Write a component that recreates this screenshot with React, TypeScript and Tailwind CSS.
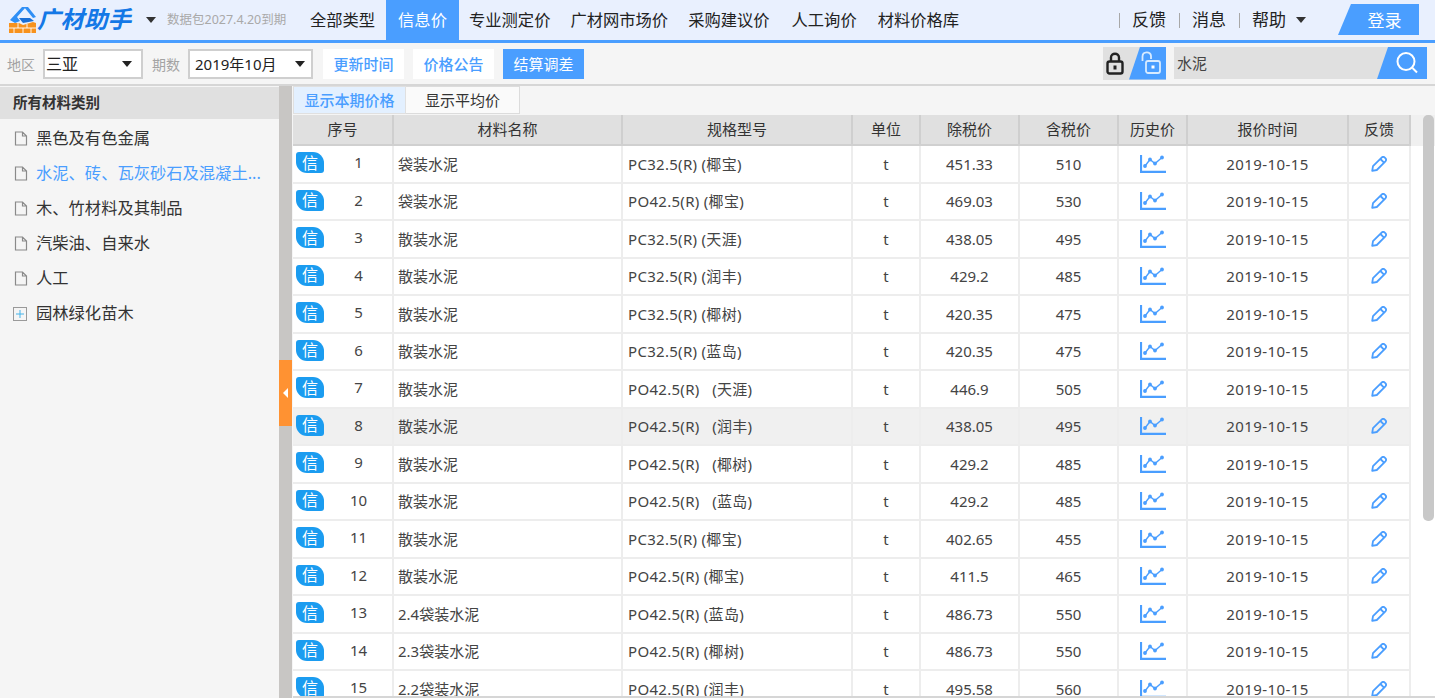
const font = { fontFamily: '"Noto Sans", "Noto Sans CJK SC", sans-serif' };

const rows = [
  ["袋装水泥", "PC32.5(R) (椰宝)", "451.33", "510"],
  ["袋装水泥", "PO42.5(R) (椰宝)", "469.03", "530"],
  ["散装水泥", "PC32.5(R) (天涯)", "438.05", "495"],
  ["散装水泥", "PC32.5(R) (润丰)", "429.2", "485"],
  ["散装水泥", "PC32.5(R) (椰树)", "420.35", "475"],
  ["散装水泥", "PC32.5(R) (蓝岛)", "420.35", "475"],
  ["散装水泥", "PO42.5(R)\u00a0\u00a0 (天涯)", "446.9", "505"],
  ["散装水泥", "PO42.5(R)\u00a0\u00a0 (润丰)", "438.05", "495"],
  ["散装水泥", "PO42.5(R)\u00a0\u00a0 (椰树)", "429.2", "485"],
  ["散装水泥", "PO42.5(R)\u00a0\u00a0 (蓝岛)", "429.2", "485"],
  ["散装水泥", "PC32.5(R) (椰宝)", "402.65", "455"],
  ["散装水泥", "PO42.5(R) (椰宝)", "411.5", "465"],
  ["2.4袋装水泥", "PO42.5(R) (蓝岛)", "486.73", "550"],
  ["2.3袋装水泥", "PO42.5(R) (椰树)", "486.73", "550"],
  ["2.2袋装水泥", "PO42.5(R) (润丰)", "495.58", "560"],
];

const navItems = ["专业测定价", "广材网市场价", "采购建议价", "人工询价", "材料价格库"];
const categories = ["黑色及有色金属", "水泥、砖、瓦灰砂石及混凝土...", "木、竹材料及其制品", "汽柴油、自来水", "人工"];
const headers = ["序号", "材料名称", "规格型号", "单位", "除税价", "含税价", "历史价", "报价时间", "反馈"];
const gridCols = "grid grid-cols-[101px_229px_230px_68px_99px_99px_69px_161px_62px]";

function Logo() {
  return (
    <svg width="28" height="28" viewBox="0 0 28 28" className="shrink-0">
      <path d="M1 14 L13 1 L17 1 L8 11 L11 15 L6 17 Z" fill="#2f8ff5" />
      <path d="M15 1 H19 L27 11 L24 12 Z" fill="#2f8ff5" />
      <path d="M10 12 H21 L25 15 L14 17 Z" fill="#1a6fd6" />
      <path d="M0 17 L10 17 L14 19 L24 16 L27 17 V27 H0 Z" fill="#f7921e" />
      <path d="M0 22 H27 M9 17 V22 M18 18 V22 M5 22 V27 M14 22 V27 M22 22 V27" stroke="#fff" strokeWidth="0.9" fill="none" />
    </svg>
  );
}

function Caret({ className }: { className: string }) {
  return <span className={`inline-block w-0 h-0 border-x-[5px] border-x-transparent border-t-[6px] ${className}`} />;
}

function Sep() {
  return <span className="w-px h-[15px] bg-[#a8a8a8]" />;
}

function FileIcon() {
  return (
    <svg width="14" height="15" viewBox="0 0 14 15" className="shrink-0" fill="none" stroke="#8a8a8a" strokeWidth="1.2">
      <path d="M1.5 1 H8.5 L12.5 5 V14 H1.5 Z M8.5 1 V5 H12.5" />
    </svg>
  );
}

function PlusIcon() {
  return (
    <svg width="14" height="14" viewBox="0 0 14 14" className="shrink-0" fill="none">
      <rect x="0.5" y="0.5" width="13" height="13" stroke="#9a9a9a" />
      <path d="M7 3 V11 M3 7 H11" stroke="#45b4ea" />
    </svg>
  );
}

function InfoBadge() {
  return (
    <span className="flex items-center justify-center w-[28px] h-[21px] ml-[3px] bg-[#1b9cf0] text-white text-[16px] leading-none rounded-tl-[3px] rounded-br-[3px] rounded-tr-[11px] rounded-bl-[11px]">
      信
    </span>
  );
}

function ChartIcon() {
  return (
    <svg width="26" height="18" viewBox="0 0 26 18" fill="none" stroke="#4a9eff" strokeWidth="1.4">
      <path d="M1 0 V16.8 H26" strokeWidth="2.2" />
      <path d="M5 11 L10 4.5 L15 8.5 L22 2.5" />
      <circle cx="5" cy="11" r="1.2" fill="#4a9eff" />
      <circle cx="10" cy="4.5" r="1.2" fill="#4a9eff" />
      <circle cx="15" cy="8.5" r="1.2" fill="#4a9eff" />
      <circle cx="22" cy="2.5" r="1.2" fill="#4a9eff" />
    </svg>
  );
}

function PencilIcon() {
  return (
    <svg width="16" height="16" viewBox="0 0 16 16" fill="none" stroke="#4a9eff" strokeWidth="1.8" strokeLinejoin="round">
      <path d="M1.2 14.8 L2 10.2 L10.6 1.6 C11.6 0.7 12.8 0.7 13.8 1.7 L14.3 2.2 C15.3 3.2 15.3 4.4 14.4 5.4 L5.8 14 Z" />
      <path d="M9.4 3 L13 6.6" />
    </svg>
  );
}

function OpenLockIcon() {
  return (
    <svg width="20" height="26" viewBox="0 0 20 26" fill="none" stroke="#d8ebff" strokeWidth="1.8">
      <path d="M1.5 11 V6.5 C1.5 1 10 1 10 6 V9" />
      <rect x="5" y="11" width="14" height="12" rx="2" />
      <rect x="10.5" y="15.5" width="3" height="3" fill="#fff" stroke="none" />
    </svg>
  );
}

function LockIcon() {
  return (
    <svg width="18" height="24" viewBox="0 0 18 24" fill="none" stroke="#222" strokeWidth="2.4">
      <path d="M5 11 V6.5 C5 1.5 13 1.5 13 6.5 V11" />
      <rect x="1.5" y="10.5" width="15" height="12" rx="2" />
      <rect x="7.5" y="14.5" width="3" height="4" fill="#222" stroke="none" />
    </svg>
  );
}

function SearchIcon() {
  return (
    <svg width="26" height="26" viewBox="0 0 26 26" fill="none" stroke="#fff" strokeWidth="2">
      <circle cx="12" cy="11.5" r="8.5" />
      <path d="M18.5 18 L23 22.5" />
    </svg>
  );
}

export default function App() {
  return (
    <div className="w-[1435px] h-[698px] overflow-hidden flex flex-col bg-[#f5f5f5] text-[#333] text-[15px]" style={font}>
      {/* top nav */}
      <header className="h-[43px] shrink-0 flex items-stretch bg-[#e9f0fe] border-b-[3px] border-[#4a9eff]">
        <div className="flex items-center w-[300px] pl-[9px] shrink-0">
          <Logo />
          <span className="w-[95px] text-[23.5px] leading-none font-bold italic text-[#1478e6] whitespace-nowrap">广材助手</span>
          <Caret className="ml-[14px] border-t-[#333]" />
          <span className="ml-[11px] text-[12.5px] text-[#a9a9a9] whitespace-nowrap">数据包2027.4.20到期</span>
        </div>
        <a className="flex items-center ml-[10px] w-[76px] text-[16.3px] text-[#222] whitespace-nowrap">全部类型</a>
        <a className="flex items-center justify-center w-[73px] bg-[#4a9eff] text-white text-[16.3px]">信息价</a>
        <nav className="flex items-center gap-[20px] ml-[10px] text-[16.3px] text-[#222] whitespace-nowrap">
          {navItems.map((n, i) => (
            <span key={n} className={i === 3 ? "ml-[2px]" : i === 4 ? "ml-[1px]" : ""}>{n}</span>
          ))}
        </nav>
        <div className="flex-1" />
        <div className="flex items-center gap-[12.5px] text-[17px] text-[#222]">
          <Sep />
          <span>反馈</span>
          <Sep />
          <span>消息</span>
          <Sep />
          <span>帮助</span>
          <Caret className="border-t-[#333] ml-[-2.5px]" />
        </div>
        <div className="flex items-center ml-[32px] mr-[16px]">
          <div className="w-[81px] h-[31px] mb-[1px] bg-[#4a9eff] [clip-path:polygon(16%_0,100%_0,100%_100%,0_100%)] flex items-center justify-center pl-[12px] pt-[2px] text-white text-[17px]">
            登录
          </div>
        </div>
      </header>

      {/* toolbar */}
      <div className="h-[43px] shrink-0 flex items-center bg-[#f5f5f5] border-b-2 border-[#d6d6d6] pt-[1px]">
        <span className="ml-[7px] text-[#a3a3a3] text-[14px]">地区</span>
        <div className="ml-[8px] w-[100px] h-[30px] bg-white border-2 border-[#cfcfcf] flex items-center pl-[1px] pr-[9px] justify-between text-[#222] text-[16px]">
          <span>三亚</span>
          <Caret className="border-t-[#222]" />
        </div>
        <span className="ml-[9px] text-[#a3a3a3] text-[14px]">期数</span>
        <div className="ml-[8px] w-[125px] h-[30px] bg-white border-2 border-[#cfcfcf] flex items-center pl-[5px] pr-[6px] justify-between text-[#222]">
          <span>2019年10月</span>
          <Caret className="border-t-[#222]" />
        </div>
        <button className="ml-[10px] w-[81px] h-[30px] bg-white text-[#4a9eff] font-medium">更新时间</button>
        <button className="ml-[9px] w-[81px] h-[30px] bg-white text-[#4a9eff] font-medium">价格公告</button>
        <button className="ml-[9px] w-[81px] h-[30px] bg-[#4a9eff] text-white">结算调差</button>
        <div className="flex-1" />
        <div className="relative mb-[2px] w-[63px] h-[33px] bg-[#e0e0e0] flex items-center pl-[3px]">
          <LockIcon />
          <div className="absolute right-0 top-0 w-[37px] h-[33px] bg-[#4a9eff] [clip-path:polygon(30%_0,100%_0,100%_100%,0_100%)] flex items-center justify-center pl-[6px]">
            <OpenLockIcon />
          </div>
        </div>
        <div className="relative mb-[2px] ml-[8px] mr-[8px] w-[253px] h-[32px] bg-[#e0e0e0] flex items-center pl-[3px] text-[#444]">
          水泥
          <div className="absolute right-0 top-0 w-[50px] h-[32px] bg-[#4a9eff] [clip-path:polygon(22%_0,100%_0,100%_100%,0_100%)] flex items-center justify-center pl-[9px]">
            <SearchIcon />
          </div>
        </div>
      </div>

      <div className="flex-1 flex min-h-0">
        {/* category tree */}
        <aside className="w-[279px] shrink-0 pt-[1px] bg-[#f5f5f5]">
          <div className="h-[32px] flex items-center pl-[13px] bg-[#e0e0e0] font-bold text-[14.5px] text-[#333]">所有材料类别</div>
          <ul className="pt-[2px]">
            {categories.map((c, i) => (
              <li key={c} className={`h-[35px] flex items-center gap-[8px] pl-[14px] text-[16.3px] ${i === 1 ? "text-[#4a9eff]" : "text-[#333]"}`}>
                <FileIcon />
                <span className="whitespace-nowrap">{c}</span>
              </li>
            ))}
            <li className="h-[35px] flex items-center gap-[9px] pl-[13px] text-[16.3px]">
              <PlusIcon />
              <span>园林绿化苗木</span>
            </li>
          </ul>
        </aside>

        {/* splitter */}
        <div className="relative w-[13px] shrink-0 bg-[#c8c6c4]">
          <div className="absolute left-0 top-[274px] w-[13px] h-[66px] bg-[#ff9232] flex items-center justify-center">
            <span className="w-0 h-0 border-y-[5px] border-y-transparent border-r-[5px] border-r-white" />
          </div>
        </div>

        {/* price table */}
        <main className="flex-1 min-w-0 flex flex-col pl-[1px] bg-[#f5f5f5]">
          <div className="h-[29px] shrink-0 flex">
            <div className="w-[113px] h-[28px] flex items-center justify-center bg-[#e3f0ff] border border-[#e0e0e0] text-[#4a9eff] font-medium">显示本期价格</div>
            <div className="w-[114px] h-[28px] flex items-center justify-center bg-[#fafafa] border border-l-0 border-[#dcdcdc] text-[#333]">显示平均价</div>
          </div>
          <div className="flex flex-1 min-h-0">
            <div className="w-[1118px] shrink-0 overflow-hidden">
              <div className={`${gridCols} h-[31px] bg-[#e0e0e0] border-b-2 border-[#d0d0d0] text-[#333]`}>
                {headers.map((h) => (
                  <div key={h} className="flex items-center justify-center border-r-2 border-[#cfcfcf]">{h}</div>
                ))}
              </div>
              {rows.map((r, i) => (
                <div key={i} className={`${gridCols} h-[37.5px] border-b-2 border-[#ededed] text-[#444] ${i === 7 ? "bg-[#f0f0f0]" : "bg-white"}`}>
                  <div className="relative flex items-center justify-center border-r-2 border-[#ededed] pb-[3px]">
                    <span className="absolute left-0 top-[6px]"><InfoBadge /></span>
                    <span className="pl-[32px]">{i + 1}</span>
                  </div>
                  <div className="flex items-center pl-[4px] border-r-2 border-[#ededed] whitespace-nowrap">{r[0]}</div>
                  <div className="flex items-center pl-[5px] border-r-2 border-[#ededed] whitespace-nowrap tracking-[0.3px]">{r[1]}</div>
                  <div className="flex items-center justify-center border-r-2 border-[#ededed]">t</div>
                  <div className="flex items-center justify-center border-r-2 border-[#ededed]">{r[2]}</div>
                  <div className="flex items-center justify-center border-r-2 border-[#ededed]">{r[3]}</div>
                  <div className="flex items-center justify-center border-r-2 border-[#ededed]"><ChartIcon /></div>
                  <div className="flex items-center justify-center border-r-2 border-[#ededed] tracking-[0.4px]">2019-10-15</div>
                  <div className="flex items-center justify-center border-r-2 border-[#ededed]"><PencilIcon /></div>
                </div>
              ))}
            </div>
            <div className="relative flex-1 flex flex-col">
              <div className="h-[31px] bg-[#f0f0f0]" />
              <div className="flex-1 bg-white" />
              <div className="absolute left-[12px] top-0 w-[11px] h-[406px] rounded-[5px] bg-[#c8c8c8]" />
            </div>
          </div>
          <div className="h-[2px] shrink-0 bg-[#d6d6d6]" />
        </main>
      </div>
    </div>
  );
}
